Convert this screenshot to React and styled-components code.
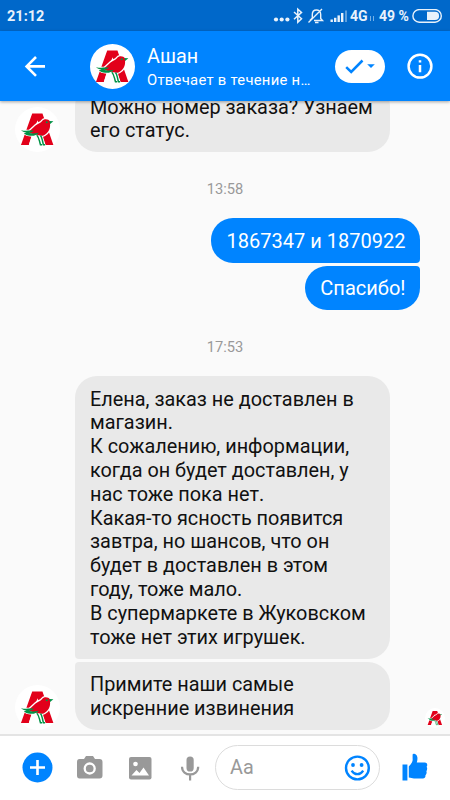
import styled, { createGlobalStyle } from "styled-components";

const GlobalStyle = createGlobalStyle`
  * {
    box-sizing: border-box;
  }
  body {
    margin: 0;
    background: #fafafa;
    font-family: Roboto, "Liberation Sans", sans-serif;
  }
  svg {
    display: block;
    flex: none;
  }
`;

const Screen = styled.div`
  width: 450px;
  height: 800px;
  display: flex;
  flex-direction: column;
  overflow: hidden;
  background: #fafafa;
`;

const StatusBar = styled.div`
  flex: none;
  height: 31px;
  padding: 1px 7px 0 7px;
  display: flex;
  align-items: center;
  background: #0068ca;
  color: #e9f2fb;
  font-size: 14.5px;
  font-weight: 700;
`;

const Clock = styled.span`
  flex: 1;
`;

const Network = styled.span`
  width: 19px;
  font-size: 14px;
`;

const Percent = styled.span`
  width: 33px;
  margin-left: 4px;
  font-size: 14px;
  white-space: nowrap;
`;

const Header = styled.header`
  flex: none;
  height: 70px;
  padding: 0 15px 0 24px;
  display: flex;
  align-items: center;
  background: #0084ff;
  box-shadow: 0 1px 3px rgba(0, 0, 0, 0.35);
  z-index: 1;
`;

const Contact = styled.div`
  width: 166px;
  margin-left: 12px;
  padding-top: 4px;
  color: #fff;
`;

const ContactName = styled.div`
  font-size: 19.8px;
  line-height: 24px;
`;

const ContactNote = styled.div`
  font-size: 14.8px;
  line-height: 23px;
  letter-spacing: 0.28px;
  white-space: nowrap;
`;

const DonePill = styled.div`
  width: 50px;
  height: 33px;
  margin: 0 21px 0 22px;
  display: flex;
  align-items: center;
  justify-content: center;
  border-radius: 17px;
  background: #fff;
`;

const Chat = styled.main`
  flex: 1;
  min-height: 0;
  padding: 0 30px 4.5px 15px;
  display: flex;
  flex-direction: column;
  justify-content: flex-end;
  overflow: hidden;
`;

const Time = styled.div`
  flex: none;
  height: ${(p) => p.$height}px;
  padding-left: 15px;
  line-height: ${(p) => p.$line}px;
  text-align: center;
  color: #999;
  font-size: 14.7px;
`;

const Row = styled.div`
  flex: none;
  display: flex;
  align-items: flex-end;
  justify-content: ${(p) => (p.$mine ? "flex-end" : "flex-start")};
  margin-top: ${(p) => p.$gap || 0}px;
`;

const AvatarSlot = styled.div`
  width: 60px;
  flex: none;
`;

const Seen = styled.div`
  flex: 1;
  display: flex;
  justify-content: flex-end;
  margin-right: -25px;
  padding-bottom: 2px;
`;

const Bubble = styled.div`
  width: ${(p) => (p.$mine ? "auto" : "315px")};
  flex: none;
  padding: ${(p) => (p.$mine ? "11.2px 14.5px 9.5px 15px" : "11.2px 15px 9.2px")};
  border-radius: ${(p) => p.$corners};
  background: ${(p) => (p.$mine ? "#0084ff" : "#e9e9e9")};
  color: ${(p) => (p.$mine ? "#fff" : "#111")};
  font-size: ${(p) => (p.$mine ? 20.05 : 19.87)}px;
  line-height: 23.8px;
  white-space: pre;
`;

const Composer = styled.footer`
  flex: none;
  height: 66px;
  padding: 0 22px 1px 22px;
  display: flex;
  align-items: center;
  border-top: 2px solid #e4e4e4;
  background: #fff;
`;

const Tool = styled.div`
  width: ${(p) => p.$width}px;
  flex: none;
`;

const Field = styled.div`
  width: 165px;
  height: 45px;
  padding: 0 9px 0 14px;
  display: flex;
  align-items: center;
  justify-content: space-between;
  border: 1px solid #dcdcdc;
  border-radius: 23px;
  color: #999;
  font-size: 19.8px;
`;

const Like = styled.div`
  margin-left: 22px;
  padding-bottom: 2px;
`;

const BIRD =
  "M40 76L62 56C70 49 78 48 82 42C86 36 101 35 106 44L106 52C107 66 100 79 88 85C78 89 70 84 62 83C54 82 48 79 40 76Z";
const WING = "M18 70C32 73 44 70 58 72C52 76 46 78 42 78C52 82 62 80 72 78C66 86 56 88 46 87C37 86 31 83 27 79L35 77C27 76 22 74 18 70Z";
const LEGS = "M66 85C73 93 73 101 77 114H82M77 86C83 93 82 102 86 114H91";

// bird standing in front of the red letter frame
function Logo({ size }) {
  return (
    <svg width={size} height={size} viewBox="0 0 136 136">
      <circle cx="68" cy="68" r="68" fill="#fff" />
      <path d="M52 20H83L116 115H92L83 90H50L42 115H18Z" fill="#e2001a" />
      <path d="M60 62L68 40L76 62Z" fill="#fff" />
      <path d={BIRD} fill="#fff" stroke="#fff" strokeWidth="8" />
      <path d={WING} fill="#fff" stroke="#fff" strokeWidth="5" />
      <path d="M50 88H84L93 117H41Z" fill="#fff" />
      <path d={BIRD} fill="#e2001a" />
      <path d={WING} fill="#009246" />
      <path d="M104 42L116 43L106 51Z" fill="#009246" />
      <circle cx="96" cy="46" r="3" fill="#009246" />
      <path d={LEGS} fill="none" stroke="#009246" strokeWidth="4.5" />
    </svg>
  );
}

function StatusIcons() {
  return (
    <svg width="78" height="20" viewBox="0 0 78 20" fill="none">
      <g fill="#e9f2fb">
        <circle cx="4" cy="13.5" r="2.1" />
        <circle cx="9.7" cy="13.5" r="2.1" />
        <circle cx="15.4" cy="13.5" r="2.1" />
      </g>
      <path d="M22 6L29.5 12.8L25.8 16.2V3.2L29.5 6.4L22 13.3" stroke="#e9f2fb" strokeWidth="1.5" />
      <path
        d="M42 14.5H50.5L48.7 12.5V8.5C48.7 2.5 40.3 2.5 40.3 8.5V12L38 14.5M43 16.5H46.5M36.5 16.5L50 3"
        stroke="#e9f2fb"
        strokeWidth="1.4"
      />
      <g fill="#e9f2fb">
        <rect x="58.5" y="13.5" width="2.4" height="2.5" />
        <rect x="62" y="11.8" width="2.4" height="4.2" />
        <rect x="65.5" y="9.4" width="2.4" height="6.6" />
        <rect x="69" y="7" width="2.4" height="9" />
        <rect x="73" y="4.5" width="2" height="11.5" opacity="0.4" />
      </g>
    </svg>
  );
}

function DataArrows() {
  return (
    <svg width="6" height="14" viewBox="0 0 6 14" fill="none">
      <path d="M1.5 7V12M4.5 7V12" stroke="#75b0e6" strokeWidth="1" />
    </svg>
  );
}

function Battery() {
  return (
    <svg width="31" height="15" viewBox="0 0 31 15">
      <rect x="0.9" y="0.6" width="28.4" height="12.6" rx="6.3" fill="none" stroke="#e9f2fb" strokeWidth="1.4" />
      <path d="M15 2.8H23A4.1 4.1 0 0 1 23 11H15Z" fill="#e9f2fb" />
    </svg>
  );
}

function App() {
  return (
    <Screen>
      <GlobalStyle />
      <StatusBar>
        <Clock>21:12</Clock>
        <StatusIcons />
        <Network>4G</Network>
        <DataArrows />
        <Percent>49 %</Percent>
        <Battery />
      </StatusBar>

      <Header>
        <svg width="66" height="22" viewBox="0 0 66 22" fill="none" stroke="#fff" strokeWidth="2.6">
          <path d="M21 11.4H3M12 2L2.6 11.4L12 20.8" />
        </svg>
        <Logo size={45} />
        <Contact>
          <ContactName>Ашан</ContactName>
          <ContactNote>Отвечает в течение н…</ContactNote>
        </Contact>
        <DonePill>
          <svg width="30" height="16" viewBox="0 0 30 16">
            <path d="M1.2 9.1L6.2 14L17.5 2.5" fill="none" stroke="#0084ff" strokeWidth="2.5" />
            <path d="M22.2 6.3H29.8L26 10Z" fill="#0084ff" />
          </svg>
        </DonePill>
        <svg width="28" height="28" viewBox="0 0 28 28" fill="none" stroke="#fff" strokeWidth="2.5">
          <circle cx="14" cy="14.2" r="11.4" />
          <path d="M14 12.9V20.2M14 8.2V10.6" />
        </svg>
      </Header>

      <Chat>
        <Row>
          <AvatarSlot>
            <Logo size={45} />
          </AvatarSlot>
          <Bubble $corners="22px">{"Можно номер заказа? Узнаем\nего статус."}</Bubble>
        </Row>
        <Time $height={66} $line={74}>
          13:58
        </Time>
        <Row $mine>
          <Bubble $mine $corners="22px 22px 4px 22px">
            1867347 и 1870922
          </Bubble>
        </Row>
        <Row $mine $gap={3}>
          <Bubble $mine $corners="22px 4px 22px 22px">
            Спасибо!
          </Bubble>
        </Row>
        <Time $height={66} $line={75}>
          17:53
        </Time>
        <Row>
          <AvatarSlot />
          <Bubble $corners="22px 22px 22px 4px">
            {`Елена, заказ не доставлен в
магазин.
К сожалению, информации,
когда он будет доставлен, у
нас тоже пока нет.
Какая-то ясность появится
завтра, но шансов, что он
будет в доставлен в этом
году, тоже мало.
В супермаркете в Жуковском
тоже нет этих игрушек.`}
          </Bubble>
        </Row>
        <Row $gap={3}>
          <AvatarSlot>
            <Logo size={45} />
          </AvatarSlot>
          <Bubble $corners="4px 22px 22px 22px">{"Примите наши самые\nискренние извинения"}</Bubble>
          <Seen>
            <Logo size={20} />
          </Seen>
        </Row>
      </Chat>

      <Composer>
        <Tool $width={54}>
          <svg width="31" height="31" viewBox="0 0 31 31">
            <circle cx="15.5" cy="15.5" r="15" fill="#0084ff" />
            <path d="M15.5 8V23M8 15.5H23" stroke="#fff" strokeWidth="2.6" />
          </svg>
        </Tool>
        <Tool $width={52}>
          <svg width="27" height="25" viewBox="0 0 27 25">
            <path
              d="M3.5 4H8L10 1H17L19 4H23.5Q26.5 4 26.5 7V20.5Q26.5 23.5 23.5 23.5H3.5Q1 23.5 1 20.5V7Q1 4 3.5 4Z"
              fill="#999"
            />
            <circle cx="13.7" cy="13.5" r="5" fill="none" stroke="#fff" strokeWidth="2.3" />
          </svg>
        </Tool>
        <Tool $width={52}>
          <svg width="24" height="24" viewBox="0 0 24 24">
            <rect x="1" y="1" width="22.5" height="22.5" rx="2" fill="#999" />
            <circle cx="7.5" cy="8" r="2.3" fill="#fff" />
            <path d="M3.5 19.5L8.5 14L11.5 17L15.5 11.5L21 19.5Z" fill="#fff" />
          </svg>
        </Tool>
        <Tool $width={35}>
          <svg width="20" height="26" viewBox="0 0 20 26">
            <rect x="6.5" y="1.5" width="7.2" height="15" rx="3.6" fill="#999" />
            <path d="M2 11.8C2 22 18.2 22 18.2 11.8M10.1 19.5V25.5" fill="none" stroke="#999" strokeWidth="2.2" />
          </svg>
        </Tool>
        <Field>
          Aa
          <svg width="26" height="26" viewBox="0 0 26 26">
            <circle cx="13.4" cy="13" r="11.4" fill="none" stroke="#0084ff" strokeWidth="2.4" />
            <circle cx="9" cy="10" r="1.9" fill="#0084ff" />
            <circle cx="17.6" cy="10" r="1.9" fill="#0084ff" />
            <path d="M7.6 15.6C10.4 20.4 16.4 20.4 19.2 15.6" fill="none" stroke="#0084ff" strokeWidth="2.2" />
          </svg>
        </Field>
        <Like>
          <svg width="26" height="28" viewBox="0 0 26 28" fill="#0084ff">
            <path d="M0.5 11.5H5.4V27.5H0.5Z" />
            <path d="M6.8 13.5C9.5 10.5 11 8.5 10.6 5.5V1.5C11 0 15 0.2 15.4 4.5C15.6 7 15 8.4 14.8 9.6H23C25.4 9.8 25.8 12.6 24.6 13.8C25.6 15.4 25.2 17.2 24.4 18.2C25 19.8 24.4 21.4 23.4 22.2C23.8 24 22.6 25.4 21 25.4H12C10 25.4 9 24.6 6.8 24.6Z" />
          </svg>
        </Like>
      </Composer>
    </Screen>
  );
}

export default App;
